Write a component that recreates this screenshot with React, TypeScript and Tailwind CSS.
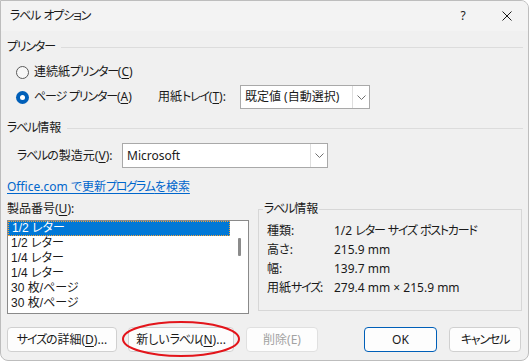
import React from 'react';

// katakana in Yu Gothic UI sits tighter than in Noto Sans CJK, so pull those runs in
function jp(s: string) {
  return s.split(/([\u30A1-\u30FC]+)/).map((p, i) =>
    i % 2 ? (
      <span key={i} className="tracking-[-1.2px]">
        {p}
      </span>
    ) : (
      p
    )
  );
}

function Chevron() {
  return (
    <svg width="9" height="5" viewBox="0 0 9 5">
      <polyline points="0.5,0.5 4.5,4.5 8.5,0.5" fill="none" stroke="#707070" strokeWidth="1" />
    </svg>
  );
}

function GroupHeader({ label }: { label: string }) {
  return (
    <div className="flex items-center h-[16px]">
      <span className="pr-[6px]">{jp(label)}</span>
      <div className="flex-1 h-px bg-[#dcdcdc]" />
    </div>
  );
}

function Radio({ checked }: { checked?: boolean }) {
  if (checked) {
    return (
      <span className="w-[13px] h-[13px] rounded-full bg-[#005fb8] flex items-center justify-center shrink-0">
        <span className="w-[5px] h-[5px] rounded-full bg-white" />
      </span>
    );
  }
  return <span className="w-[13px] h-[13px] rounded-full border border-[#5a5a5a] bg-[#f7f7f7] shrink-0" />;
}

function Combo({ text, width }: { text: string; width: string }) {
  return (
    <div className={`${width} h-full flex bg-white border border-[#a9a9a9]`}>
      <span className="flex-1 flex items-center pl-[4px] whitespace-nowrap">{text}</span>
      <span className="w-[17px] flex items-center justify-center border-l border-[#dedede]">
        <Chevron />
      </span>
    </div>
  );
}

function Key({ k }: { k: string }) {
  return <u className="underline-offset-2">{k}</u>;
}

const items = ['1/2 レター', '1/2 レター', '1/4 レター', '1/4 レター', '30 枚/ページ', '30 枚/ページ'];

const info: [string, string][] = [
  ['種類:', '1/2 レター サイズ ポストカード'],
  ['高さ:', '215.9 mm'],
  ['幅:', '139.7 mm'],
  ['用紙サイズ:', '279.4 mm × 215.9 mm'],
];

function Btn({ children, width, primary, disabled }: { children: React.ReactNode; width: string; primary?: boolean; disabled?: boolean }) {
  return (
    <div
      className={`${width} h-[25px] rounded-[4px] flex items-center justify-center bg-[#fdfdfd] border whitespace-nowrap ${
        primary ? 'border-[#005fb8]' : disabled ? 'border-[#e0e0e0] text-[#a2a2a2]' : 'border-[#d0d0d0]'
      }`}
    >
      {children}
    </div>
  );
}

export default function App() {
  return (
    <div className="w-[530px] h-[362px] bg-white text-[12px] leading-[16px] text-[#1a1a1a] font-['Noto_Sans','Noto_Sans_CJK_JP',sans-serif] [font-feature-settings:'palt']">
      <div className="relative w-[529px] h-[361px] bg-[#f0f0f0] border border-[#bdbdbd] rounded-tr-[8px] rounded-b-[8px] overflow-hidden">
        {/* title bar */}
        <div className="h-[30px] bg-[#f3f3f3] flex items-center pl-[9px]">
          <span className="flex-1">{jp('ラベル オプション')}</span>
          <span className="w-[12px] text-center mr-[33px]">?</span>
          <svg width="10" height="10" viewBox="0 0 10 10" className="mr-[16px]">
            <path d="M0.5 0.5 L9.5 9.5 M9.5 0.5 L0.5 9.5" stroke="#1a1a1a" strokeWidth="1" />
          </svg>
        </div>

        <div className="pl-[6px] pr-[5px]">
          <div className="mt-[8px]">
            <GroupHeader label="プリンター" />
          </div>

          <div className="mt-[8px] h-[18px] flex items-center pl-[9px]">
            <Radio />
            <span className="ml-[5px]">
              {jp('連続紙プリンター')}(<Key k="C" />)
            </span>
          </div>

          <div className="mt-[4px] h-[24px] flex items-center">
            <div className="w-[151px] flex items-center pl-[9px]">
              <Radio checked />
              <span className="ml-[5px]">
                {jp('ページ プリンター')}(<Key k="A" />)
              </span>
            </div>
            <span className="w-[82px]">
              {jp('用紙トレイ')}(<Key k="T" />):
            </span>
            <Combo text="既定値 (自動選択)" width="w-[130px]" />
          </div>

          <div className="mt-[11px]">
            <GroupHeader label="ラベル情報" />
          </div>

          <div className="mt-[7px] h-[25px] flex items-center">
            <span className="ml-[10px] w-[105px]">
              {jp('ラベルの製造元')}(<Key k="V" />):
            </span>
            <Combo text="Microsoft" width="w-[206px]" />
          </div>

          <div className="mt-[11px] h-[16px]">
            <span className="text-[#0066cc] underline underline-offset-2">{jp('Office.com で更新プログラムを検索')}</span>
          </div>

          <div className="mt-[6px] flex">
            <div className="w-[242px]">
              <div className="h-[16px]">
                製品番号(<Key k="U" />):
              </div>
              <div className="mt-[3px] h-[94px] bg-white border border-[#8a8a8a] flex">
                <div className="w-[222px] flex flex-col font-['Liberation_Sans','Noto_Sans_CJK_JP',sans-serif]">
                  {items.map((it, i) => (
                    <div
                      key={i}
                      className={`h-[15px] leading-[13px] flex items-center pl-[3px] whitespace-nowrap ${
                        i === 0 ? 'bg-[#0078d7] text-white border border-dotted border-[#f3a23a]' : ''
                      }`}
                    >
                      {it}
                    </div>
                  ))}
                </div>
                <div className="flex-1 flex justify-center pt-[17px]">
                  <div className="w-[3px] h-[18px] rounded-[1px] bg-[#8b8b8b]" />
                </div>
              </div>
            </div>

            <fieldset className="ml-[9px] w-[264px] h-[110px] border border-[#d7d7d7]">
              <legend className="ml-[4px] px-px">{jp('ラベル情報')}</legend>
              <div className="mt-[6px] pl-[8px]">
                {info.map(([k, v]) => (
                  <div key={k} className="h-[19px] flex items-start whitespace-nowrap">
                    <span className="w-[67px]">{jp(k)}</span>
                    <span>{jp(v)}</span>
                  </div>
                ))}
              </div>
            </fieldset>
          </div>

          <div className="mt-[13px] flex items-center">
            <Btn width="w-[110px]">
              {jp('サイズの詳細')}(<Key k="D" />)...
            </Btn>
            <div className="ml-[11px]">
              <Btn width="w-[106px]">
                {jp('新しいラベル')}(<Key k="N" />)...
              </Btn>
            </div>
            <div className="ml-[12px]">
              <Btn width="w-[72px]" disabled>
                削除(E)
              </Btn>
            </div>
            <div className="ml-[46px]">
              <Btn width="w-[73px]" primary>
                OK
              </Btn>
            </div>
            <div className="ml-[12px]">
              <Btn width="w-[72px]">{jp('キャンセル')}</Btn>
            </div>
          </div>
        </div>

        <svg className="absolute left-[120px] top-[319px]" width="120" height="38" viewBox="0 0 120 38">
          <ellipse cx="60" cy="19" rx="58" ry="17" fill="none" stroke="#e3151b" strokeWidth="2" />
        </svg>
      </div>
    </div>
  );
}
